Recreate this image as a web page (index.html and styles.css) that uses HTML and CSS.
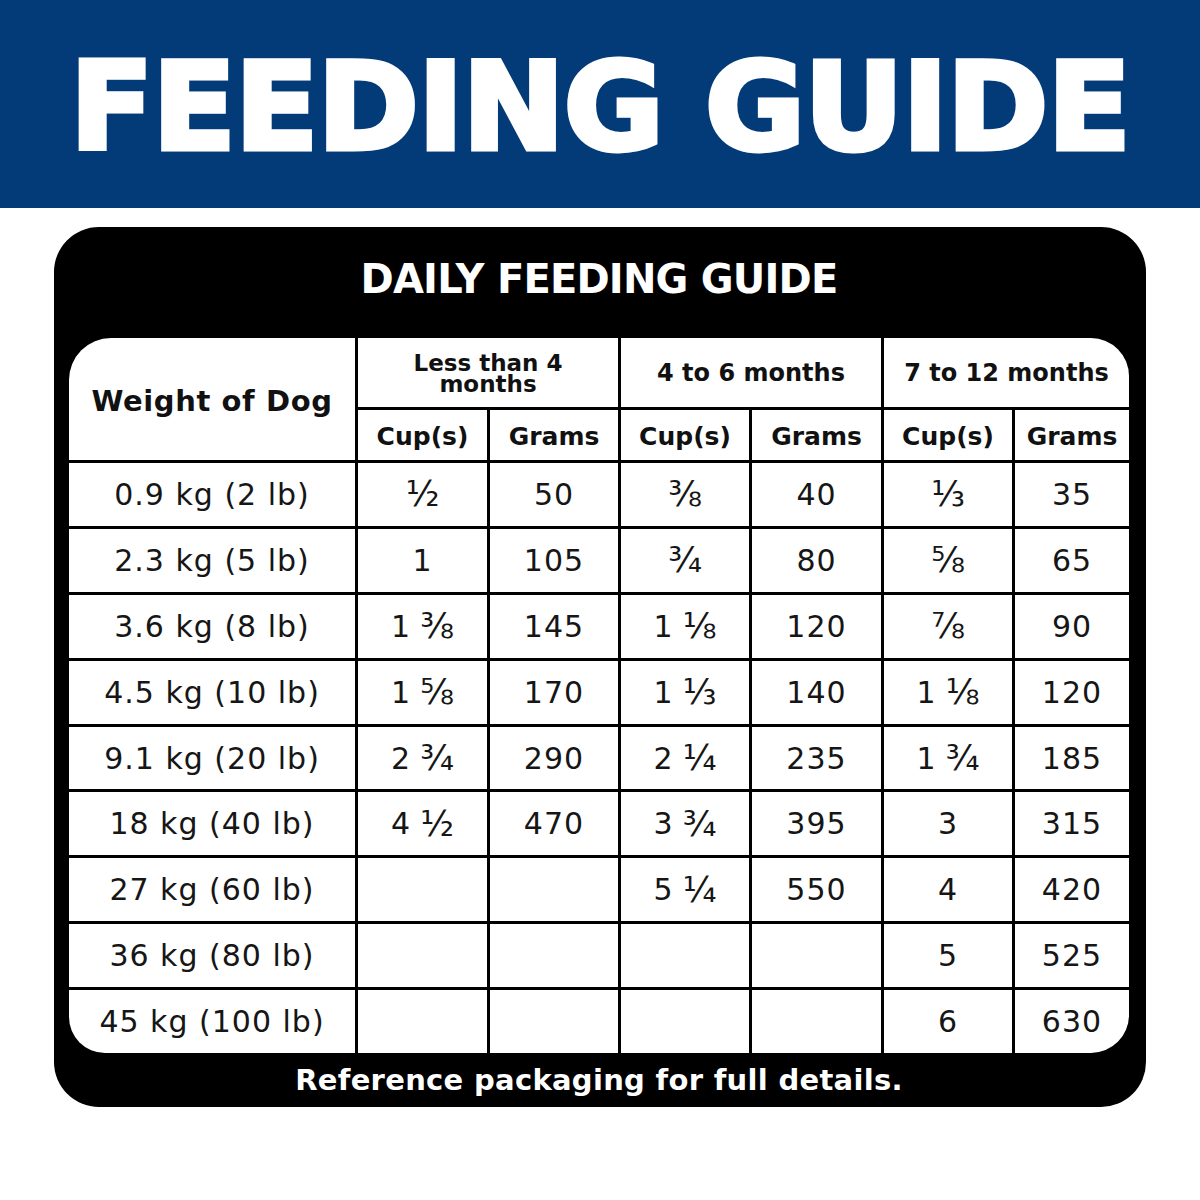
FILE: index.html
```html
<!DOCTYPE html>
<html lang="en">
<head>
<meta charset="utf-8">
<title>Feeding Guide</title>
<link rel="stylesheet" href="styles.css">
</head>
<body>
<header class="banner">
  <h1 class="banner-title">FEEDING GUIDE</h1>
</header>
<section class="frame">
  <h2 class="frame-title">DAILY FEEDING GUIDE</h2>
  <div class="chart">
    <div class="cell head dog">Weight of Dog</div>
    <div class="cell head age two-line">Less than 4<br>months</div>
    <div class="cell head age">4 to 6 months</div>
    <div class="cell head age">7 to 12 months</div>
    <div class="cell head sub">Cup(s)</div>
    <div class="cell head sub">Grams</div>
    <div class="cell head sub">Cup(s)</div>
    <div class="cell head sub">Grams</div>
    <div class="cell head sub">Cup(s)</div>
    <div class="cell head sub">Grams</div>

    <div class="cell">0.9 kg (2 lb)</div><div class="cell"><span class="frac">½</span></div><div class="cell">50</div><div class="cell"><span class="frac">⅜</span></div><div class="cell">40</div><div class="cell"><span class="frac">⅓</span></div><div class="cell">35</div>
    <div class="cell">2.3 kg (5 lb)</div><div class="cell">1</div><div class="cell">105</div><div class="cell"><span class="frac">¾</span></div><div class="cell">80</div><div class="cell"><span class="frac">⅝</span></div><div class="cell">65</div>
    <div class="cell">3.6 kg (8 lb)</div><div class="cell">1<span class="frac mixed">⅜</span></div><div class="cell">145</div><div class="cell">1<span class="frac mixed">⅛</span></div><div class="cell">120</div><div class="cell"><span class="frac">⅞</span></div><div class="cell">90</div>
    <div class="cell">4.5 kg (10 lb)</div><div class="cell">1<span class="frac mixed">⅝</span></div><div class="cell">170</div><div class="cell">1<span class="frac mixed">⅓</span></div><div class="cell">140</div><div class="cell">1<span class="frac mixed">⅛</span></div><div class="cell">120</div>
    <div class="cell">9.1 kg (20 lb)</div><div class="cell">2<span class="frac mixed">¾</span></div><div class="cell">290</div><div class="cell">2<span class="frac mixed">¼</span></div><div class="cell">235</div><div class="cell">1<span class="frac mixed">¾</span></div><div class="cell">185</div>
    <div class="cell">18 kg (40 lb)</div><div class="cell">4<span class="frac mixed">½</span></div><div class="cell">470</div><div class="cell">3<span class="frac mixed">¾</span></div><div class="cell">395</div><div class="cell">3</div><div class="cell">315</div>
    <div class="cell">27 kg (60 lb)</div><div class="cell"></div><div class="cell"></div><div class="cell">5<span class="frac mixed">¼</span></div><div class="cell">550</div><div class="cell">4</div><div class="cell">420</div>
    <div class="cell">36 kg (80 lb)</div><div class="cell"></div><div class="cell"></div><div class="cell"></div><div class="cell"></div><div class="cell">5</div><div class="cell">525</div>
    <div class="cell">45 kg (100 lb)</div><div class="cell"></div><div class="cell"></div><div class="cell"></div><div class="cell"></div><div class="cell">6</div><div class="cell">630</div>
  </div>
  <p class="frame-note">Reference packaging for full details.</p>
</section>
</body>
</html>
```

FILE: styles.css
```css
html, body {
  margin: 0;
  padding: 0;
  background: #ffffff;
}

body {
  width: 1200px;
  height: 1200px;
  font-family: "DejaVu Sans", "Liberation Sans", sans-serif;
  color: #111111;
}

.banner {
  height: 208px;
  background: #033a78;
  display: flex;
  align-items: center;
  justify-content: center;
  padding-top: 6px;
  box-sizing: border-box;
}

.banner-title {
  margin: 0;
  color: #ffffff;
  font-weight: 700;
  font-size: 122px;
  line-height: 1;
  letter-spacing: -0.8px;
  -webkit-text-stroke: 5px #ffffff;
  white-space: nowrap;
}

.frame {
  width: 1092px;
  margin: 19px 0 0 54px;
  box-sizing: border-box;
  padding: 0 17px 0 15px;
  background: #000000;
  border-radius: 45px;
}

.frame-title {
  margin: 0;
  height: 111px;
  box-sizing: border-box;
  padding-bottom: 8px;
  display: flex;
  align-items: center;
  justify-content: center;
  color: #ffffff;
  font-weight: 700;
  font-size: 40px;
  letter-spacing: -0.8px;
}

.chart {
  display: grid;
  grid-template-columns: 286px 129px 128px 128px 129px 128px 114px;
  grid-template-rows: 69px 50px repeat(9, 62.9px);
  gap: 3px;
  background: #000000;
  border-radius: 42px 38px 38px 36px;
  overflow: hidden;
}

.cell {
  background: #ffffff;
  display: flex;
  align-items: center;
  justify-content: center;
  text-align: center;
  font-size: 30px;
  font-weight: 400;
  letter-spacing: 1px;
  color: #161616;
  white-space: nowrap;
}

.frac {
  font-size: 1.16em;
  letter-spacing: 0;
}

.mixed {
  margin-left: 9px;
}

.head {
  font-weight: 700;
  color: #111111;
}

.dog {
  grid-row: span 2;
  font-size: 29px;
  letter-spacing: 0.6px;
  padding-top: 4px;
}

.age {
  grid-column: span 2;
  font-size: 24px;
  letter-spacing: 0;
}

.two-line {
  font-size: 23px;
  line-height: 21px;
  padding-top: 2px;
}

.sub {
  font-size: 25px;
  letter-spacing: 0;
  padding-top: 2px;
}

.frame-note {
  margin: 0;
  height: 54px;
  display: flex;
  align-items: center;
  justify-content: center;
  color: #ffffff;
  font-weight: 700;
  font-size: 29px;
  letter-spacing: 0.3px;
}
```
